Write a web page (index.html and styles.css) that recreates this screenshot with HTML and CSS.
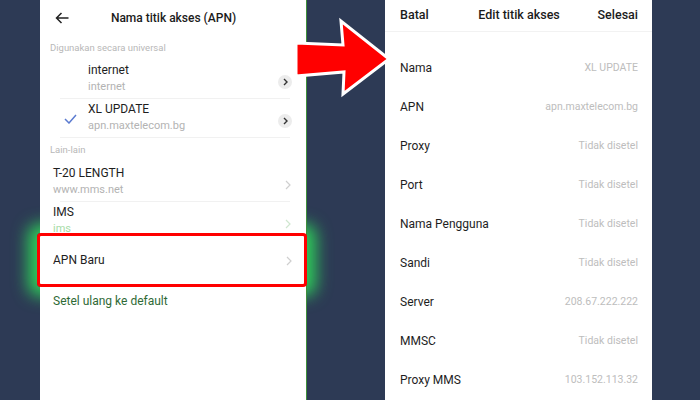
FILE: index.html
```html
<!DOCTYPE html>
<html lang="id">
<head>
	<meta charset="UTF-8">
	<title>Nama titik akses (APN)</title>
	<link rel="stylesheet" href="styles.css">
</head>
<body>
	<div class="stage">

		<!-- daftar APN -->
		<section class="phone phone-left">
			<header class="left-head">
				<svg class="back" viewBox="0 0 14 12"><path d="M13.5 6H1.5M6.5 1L1.5 6l5 5" fill="none" stroke="#222" stroke-width="1.5"/></svg>
				<h1 class="left-title">Nama titik akses (APN)</h1>
			</header>

			<div class="group-label">Digunakan secara universal</div>

			<div class="apn-row">
				<span class="apn-check"></span>
				<div class="apn-text">
					<div class="apn-name">internet</div>
					<div class="apn-sub">internet</div>
				</div>
				<span class="chev-circle"><svg width="5" height="8" viewBox="0 0 5 8"><path d="M1 1l3 3-3 3" fill="none" stroke="#333" stroke-width="1.4"/></svg></span>
			</div>

			<div class="apn-row sep">
				<span class="apn-check"><svg width="13" height="10" viewBox="0 0 13 10"><path d="M1 5l4 4 7-8" fill="none" stroke="#5b7bd0" stroke-width="1.5"/></svg></span>
				<div class="apn-text">
					<div class="apn-name">XL UPDATE</div>
					<div class="apn-sub">apn.maxtelecom.bg</div>
				</div>
				<span class="chev-circle"><svg width="5" height="8" viewBox="0 0 5 8"><path d="M1 1l3 3-3 3" fill="none" stroke="#333" stroke-width="1.4"/></svg></span>
			</div>

			<div class="group-label second sep">Lain-lain</div>

			<div class="apn-row">
				<div class="apn-text">
					<div class="apn-name">T-20 LENGTH</div>
					<div class="apn-sub">www.mms.net</div>
				</div>
				<svg class="chev" viewBox="0 0 6 10"><path d="M1 1l4 4-4 4" fill="none" stroke="#cfcfcf" stroke-width="1.2"/></svg>
			</div>

			<div class="apn-row sep">
				<div class="apn-text">
					<div class="apn-name">IMS</div>
					<div class="apn-sub ims">ims</div>
				</div>
				<svg class="chev" viewBox="0 0 6 10"><path d="M1 1l4 4-4 4" fill="none" stroke="#cfe6cf" stroke-width="1.2"/></svg>
			</div>

			<div class="apn-new">
				<span class="apn-name">APN Baru</span>
				<svg class="chev" viewBox="0 0 6 10"><path d="M1 1l4 4-4 4" fill="none" stroke="#cfcfcf" stroke-width="1.2"/></svg>
			</div>

			<div class="reset">Setel ulang ke default</div>
		</section>

		<!-- edit APN -->
		<section class="phone phone-right">
			<header class="right-head">
				<span>Batal</span>
				<span>Edit titik akses</span>
				<span class="done">Selesai</span>
			</header>
			<div class="fields">
				<div class="field"><span class="field-label">Nama</span><span class="field-value">XL UPDATE</span></div>
				<div class="field"><span class="field-label">APN</span><span class="field-value">apn.maxtelecom.bg</span></div>
				<div class="field"><span class="field-label">Proxy</span><span class="field-value">Tidak disetel</span></div>
				<div class="field"><span class="field-label">Port</span><span class="field-value">Tidak disetel</span></div>
				<div class="field"><span class="field-label">Nama Pengguna</span><span class="field-value">Tidak disetel</span></div>
				<div class="field"><span class="field-label">Sandi</span><span class="field-value">Tidak disetel</span></div>
				<div class="field"><span class="field-label">Server</span><span class="field-value">208.67.222.222</span></div>
				<div class="field"><span class="field-label">MMSC</span><span class="field-value">Tidak disetel</span></div>
				<div class="field"><span class="field-label">Proxy MMS</span><span class="field-value">103.152.113.32</span></div>
			</div>
		</section>

		<!-- sorotan -->
		<div class="glow"></div>
		<svg class="arrow" viewBox="285 12 115 95">
			<polygon points="296,43 343,45 341,21 389,59 343,94 344,72 296,76" fill="#ff0000" stroke="#fff" stroke-width="3" stroke-linejoin="miter"/>
		</svg>
	</div>
</body>
</html>
```

FILE: styles.css
```css
body {
	margin: 0;
	padding: 0;
	background: #2d3a55;
}

.stage {
	display: flex;
	position: relative;
	width: 700px;
	height: 400px;
	overflow: hidden;
	background: #2d3a55;
	font-family: Roboto, "Liberation Sans", sans-serif;
	color: #1e1e1e;
}

.phone {
	background: #fff;
	height: 400px;
	flex: none;
}

.phone-left {
	margin-left: 40px;
	width: 266px;
	border-right: 1px solid #3f8f3a;
	position: relative;
	z-index: 1;
}

.phone-right {
	margin-left: 78px;
	width: 267px;
}

/* kiri */
.left-head {
	height: 36px;
	display: flex;
	align-items: center;
	padding: 0 28px 0 15px;
}

.back { width: 14px; height: 12px; flex: none; }

.left-title {
	flex: 1;
	margin: 0;
	text-align: center;
	font-size: 12px;
	font-weight: 500;
	color: #1b1b1b;
}

.group-label {
	height: 23px;
	line-height: 23px;
	padding-left: 10px;
	font-size: 9.5px;
	color: #b8b8b8;
}
.group-label.second { height: 25px; line-height: 25px; }

.sep {
	background: linear-gradient(#f1f1f1, #f1f1f1) no-repeat 20px 0 / calc(100% - 36px) 1px;
}

.apn-row {
	display: flex;
	align-items: center;
	height: 39px;
	padding: 0 14px 0 13px;
	box-sizing: border-box;
}

.apn-check {
	width: 35px;
	flex: none;
	display: flex;
	justify-content: center;
	margin-top: 3px;
}

.apn-text { flex: 1; }

.apn-name {
	font-size: 12px;
	line-height: 16px;
	color: #1e1e1e;
}

.apn-sub {
	font-size: 11px;
	line-height: 17px;
	color: #b3b3b3;
}
.apn-sub.ims { color: #a6dca6; }

.chev-circle {
	width: 14px;
	height: 14px;
	border-radius: 50%;
	background: #ececec;
	display: flex;
	align-items: center;
	justify-content: center;
	margin-top: 6px;
	flex: none;
}

.chev {
	width: 6px;
	height: 10px;
	margin: 6px 1px 0 0;
	flex: none;
}

.apn-new {
	margin: -7px -1px 0 -3px;
	height: 54px;
	border: 3px solid #ff0000;
	border-radius: 4px;
	background: #fff;
	box-sizing: border-box;
	display: flex;
	align-items: center;
	justify-content: space-between;
	padding: 0 12px 0 13px;
	position: relative;
}
.apn-new .chev { margin: 2px 0 0 0; }

.reset {
	height: 28px;
	line-height: 28px;
	padding-left: 13px;
	font-size: 12px;
	color: #2f6a36;
}

/* kanan */
.right-head {
	height: 32px;
	box-sizing: border-box;
	display: grid;
	grid-template-columns: 1fr auto 1fr;
	align-items: center;
	padding: 0 14px 3px 15px;
	border-bottom: 1px solid #f2f2f2;
	font-size: 12.5px;
	font-weight: 500;
	color: #1b1b1b;
}
.right-head .done { justify-self: end; }

.fields { padding-top: 16px; }

.field {
	display: flex;
	justify-content: space-between;
	align-items: center;
	height: 39px;
	padding: 0 14px 0 15px;
}

.field-label { font-size: 12px; color: #1e1e1e; }
.field-value { font-size: 10.5px; color: #bdbdbd; }

/* sorotan */
.glow {
	position: absolute;
	left: 37px;
	top: 233px;
	width: 270px;
	height: 54px;
	border-radius: 4px;
	box-shadow: 0 0 16px 9px rgba(46, 214, 90, .95);
}

.arrow {
	position: absolute;
	left: 285px;
	top: 12px;
	width: 115px;
	height: 95px;
	z-index: 2;
}
```
